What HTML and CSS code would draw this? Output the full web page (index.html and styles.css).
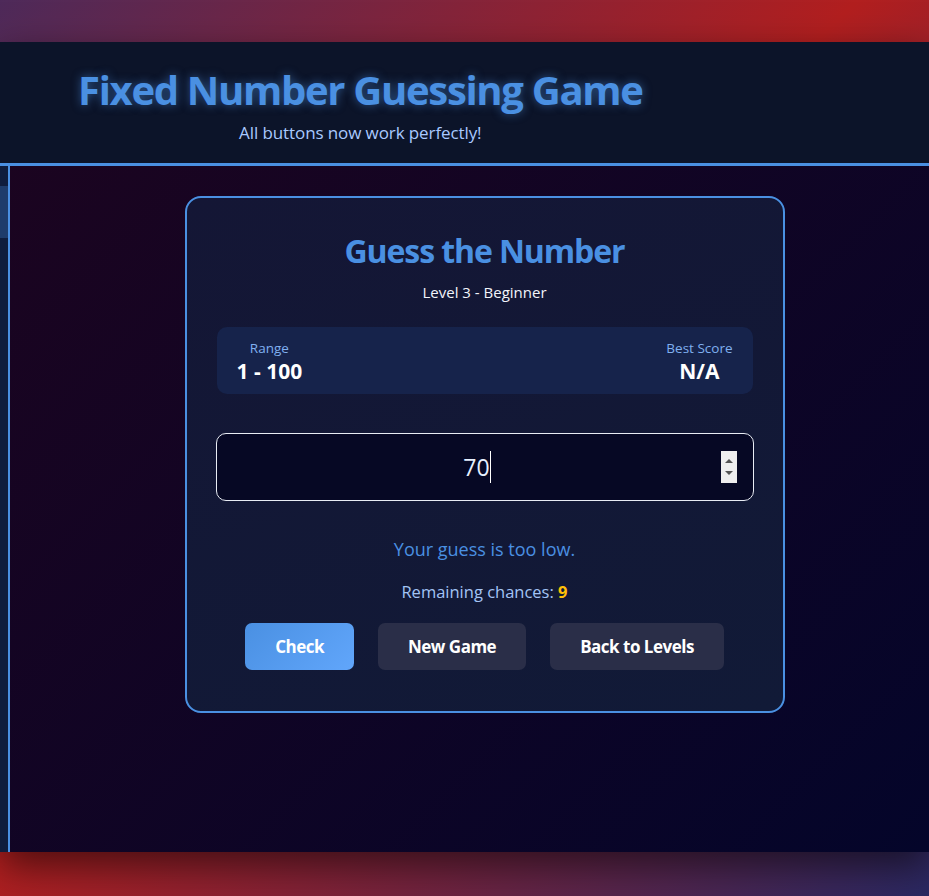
FILE: index.html
```html
<!DOCTYPE html>
<html lang="en">
<head>
<meta charset="utf-8">
<title>Fixed Number Guessing Game</title>
<link rel="stylesheet" href="styles.css">
</head>
<body>
<div class="app">
  <header class="header">
    <div class="brand">
      <h1 class="brand-title">Fixed Number Guessing Game</h1>
      <p class="brand-sub">All buttons now work perfectly!</p>
    </div>
  </header>
  <div class="main">
    <aside class="sidebar"><div class="side-item"></div></aside>
    <section class="content">
      <div class="card">
        <h2 class="card-title">Guess the Number</h2>
        <p class="card-level">Level 3 - Beginner</p>
        <div class="stats">
          <div class="stat">
            <div class="stat-label">Range</div>
            <div class="stat-value">1 - 100</div>
          </div>
          <div class="stat">
            <div class="stat-label">Best Score</div>
            <div class="stat-value">N/A</div>
          </div>
        </div>
        <div class="guess-wrap">
          <input class="guess" type="text" inputmode="numeric" value="70">
          <span class="caret"></span>
          <span class="spin"><span class="spin-up"></span><span class="spin-down"></span></span>
        </div>
        <p class="feedback">Your guess is too low.</p>
        <p class="chances">Remaining chances: <strong class="chances-num">9</strong></p>
        <div class="actions">
          <button class="btn btn-primary">Check</button>
          <button class="btn btn-dark">New Game</button>
          <button class="btn btn-dark">Back to Levels</button>
        </div>
      </div>
    </section>
  </div>
</div>
</body>
</html>
```

FILE: styles.css
```css
* { box-sizing: border-box; }
html, body { margin: 0; height: 100%; }
body {
  font-family: "Open Sans", "Noto Sans", sans-serif;
  background: linear-gradient(135deg, #4e2a5a 0%, #b21f1f 47%, #2a2862 100%);
  padding: 42px 0 44px;
  overflow: hidden;
}
.app {
  height: 810px;
  display: flex;
  flex-direction: column;
  box-shadow: 0 14px 36px rgba(0, 0, 0, 0.55);
}
.header {
  background: #0c1429;
  border-bottom: 3px solid #4a90e2;
  padding: 24px 78px 0;
  height: 124px;
}
.brand { display: inline-block; text-align: center; }
.brand-title {
  margin: 0;
  font-size: 40px;
  line-height: 48px;
  font-weight: 700;
  color: #4a90e2;
  letter-spacing: -1.3px;
  text-shadow: 0 0 10px rgba(74, 144, 226, 0.55);
}
.brand-sub {
  margin: 7px 0 0;
  font-size: 17px;
  line-height: 24px;
  color: #a9c9ff;
  letter-spacing: -0.1px;
}
.main {
  flex: 1;
  display: flex;
  background: linear-gradient(135deg, #1b0420 0%, #04052a 100%);
}
.sidebar {
  width: 10px;
  background: #0f1d3d;
  border-right: 2px solid #4a90e2;
  padding-top: 20px;
}
.side-item { height: 52px; background: #1e3c6b; }
.content {
  flex: 1;
  display: flex;
  justify-content: center;
  align-items: flex-start;
  padding: 30px 0 0 30px;
}
.card {
  width: 600px;
  background: linear-gradient(160deg, #141635 0%, #111a37 100%);
  border: 2px solid #4a90e2;
  border-radius: 16px;
  padding: 33px 30px 41px;
  text-align: center;
}
.card-title {
  margin: 0;
  font-size: 32px;
  line-height: 40px;
  font-weight: 700;
  color: #4a90e2;
  letter-spacing: -1.1px;
}
.card-level {
  margin: 9px 0 0;
  font-size: 15px;
  line-height: 24px;
  color: #f2f4fa;
}
.stats {
  margin-top: 23px;
  background: #16234b;
  border-radius: 10px;
  padding: 13px 20px 10px;
  display: flex;
  justify-content: space-between;
}
.stat { text-align: center; }
.stat-label {
  font-size: 13.5px;
  line-height: 16px;
  color: #80b0f0;
}
.stat-value {
  margin-top: 2px;
  font-size: 21px;
  line-height: 26px;
  font-weight: 700;
  color: #ffffff;
}
.guess-wrap {
  position: relative;
  margin: 39px -1px 0;
}
.guess {
  display: block;
  width: 100%;
  height: 68px;
  background: #060824;
  border: 1.5px solid #e8ecf4;
  border-radius: 10px;
  color: #e6f0ff;
  font-family: "Open Sans", "Noto Sans", sans-serif;
  font-size: 23px;
  text-align: center;
  padding: 0 16px 0 0;
  outline: none;
  caret-color: #ffffff;
}
.caret {
  position: absolute;
  left: 274px;
  top: 18px;
  width: 1px;
  height: 32px;
  background: #ffffff;
}
.spin {
  position: absolute;
  right: 17px;
  top: 18px;
  width: 16px;
  height: 32px;
  background: #efefef;
  display: flex;
  flex-direction: column;
  align-items: center;
  justify-content: center;
  gap: 8px;
}
.spin-up {
  width: 0; height: 0;
  border-left: 4px solid transparent;
  border-right: 4px solid transparent;
  border-bottom: 4px solid #555;
}
.spin-down {
  width: 0; height: 0;
  border-left: 4px solid transparent;
  border-right: 4px solid transparent;
  border-top: 4px solid #555;
}
.feedback {
  margin: 35px 0 0;
  font-size: 18px;
  line-height: 26px;
  color: #4a90e2;
}
.chances {
  margin: 18px 0 0;
  font-size: 16.5px;
  line-height: 24px;
  color: #a3c4f5;
}
.chances-num { color: #ffc107; font-weight: 700; }
.actions {
  margin-top: 19px;
  display: flex;
  justify-content: center;
  gap: 24px;
}
.btn {
  font-family: "Open Sans", "Noto Sans", sans-serif;
  font-size: 17px;
  font-weight: 700;
  line-height: 23px;
  letter-spacing: -0.5px;
  padding: 12px 30px;
  border: none;
  border-radius: 7px;
  color: #ffffff;
  cursor: pointer;
}
.btn-primary { background: linear-gradient(135deg, #4a90e2 0%, #61a6fb 100%); }
.btn-dark { background: #2a2e48; }
```
